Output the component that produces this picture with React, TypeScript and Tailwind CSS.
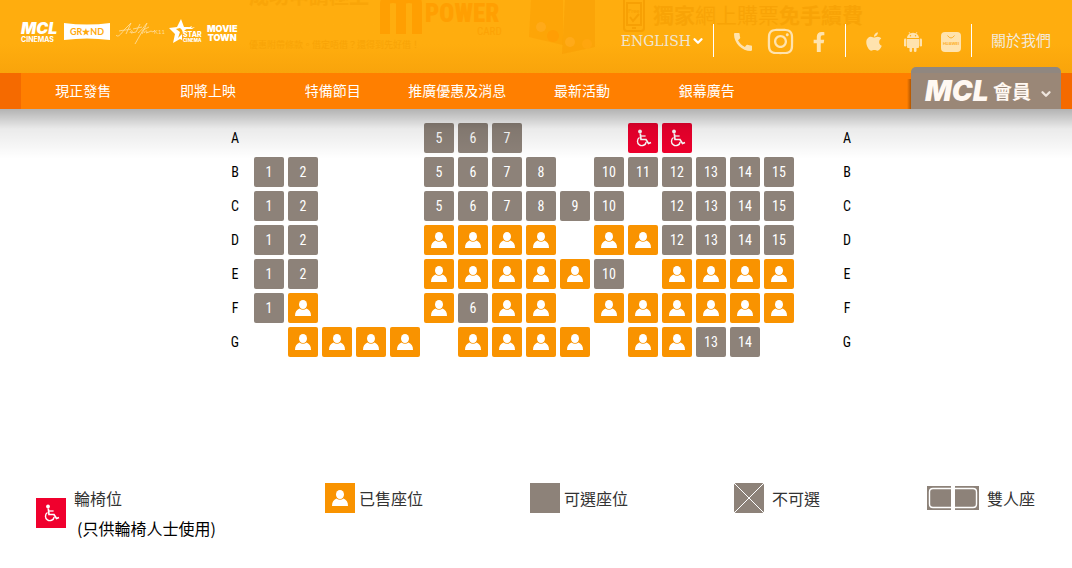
import type { ReactNode } from "react";
import { ChevronDown } from "lucide-react";
import { FaApple, FaFacebookF, FaInstagram } from "react-icons/fa";
import { MdCall } from "react-icons/md";

const NAV = ["現正發售", "即將上映", "特備節目", "推廣優惠及消息", "最新活動", "銀幕廣告"];

// a = available, s = sold, w = wheelchair, . = aisle
const ROWS: [string, string][] = [
  ["A", ".....aaa...ww..."],
  ["B", "aa...aaaa.aaaaaa"],
  ["C", "aa...aaaaaa.aaaa"],
  ["D", "aa...ssss.ssaaaa"],
  ["E", "aa...sssssa.ssss"],
  ["F", "as...sass.ssssss"],
  ["G", ".ssss.ssss.ssaa."],
];

function PersonIcon() {
  return (
    <svg viewBox="0 0 30 30" className="h-[30px] w-[30px]" fill="#fff" aria-hidden="true">
      <ellipse cx="15" cy="11.5" rx="4" ry="4.500" />
      <path d="M7 23c0-4 1.500-6 4.500-7.500 2 1.700 5 1.700 7 0 3 1.500 4.500 3.500 4.500 7.500z" />
    </svg>
  );
}

function WheelchairIcon() {
  return (
    <svg viewBox="0 0 30 30" className="h-[30px] w-[30px]" fill="none" stroke="#fff" aria-hidden="true">
      <circle cx="12" cy="8.500" r="1.900" fill="#fff" stroke="none" />
      <path d="M12.300 10.500l.7 6h5l2.500 4 2.500-1" strokeWidth="1.700" />
      <path d="M12.600 13h5" strokeWidth="1.300" />
      <path d="M11.500 14.500a4.400 4.400 0 1 0 6.700 4.500" strokeWidth="1.400" />
    </svg>
  );
}

function Seat({ type, row, index }: { type: string; row: string; index: number }) {
  const no = index < 5 ? index + 1 : index;

  if (type === ".") return <span className="h-[30px] w-[30px]" />;
  if (type === "s")
    return (
      <button type="button" disabled aria-label={`${row}${no}`} className="h-[30px] w-[30px] rounded-xs bg-[#f99300]">
        <PersonIcon />
      </button>
    );
  if (type === "w")
    return (
      <button type="button" aria-label={`${row}${no}`} className="h-[30px] w-[30px] rounded-xs bg-[#f0002d]">
        <WheelchairIcon />
      </button>
    );
  return (
    <button type="button" className="h-[30px] w-[30px] rounded-xs bg-[#8d8279] text-center text-sm text-white">
      {no}
    </button>
  );
}

function Logos() {
  return (
    <div className="flex items-center gap-1 pt-[18px] text-white">
      <div className="w-[38px] font-['Inter',sans-serif]">
        <div className="text-base leading-4 font-black italic">MCL</div>
        <div className="text-[7px] leading-2 font-bold">CINEMAS</div>
      </div>
      <svg width="48" height="18" viewBox="0 0 48 18" role="img" aria-label="Grand">
        <path d="M1 0q23 3 46 0v17q-23-3-46 0z" fill="#fff" />
        <text x="24" y="12" textAnchor="middle" fontSize="9" fontWeight="700" fontFamily="Lato, sans-serif" fill="#ffaa0d">
          GR★ND
        </text>
      </svg>
      <svg width="50" height="26" viewBox="0 0 50 26" role="img" aria-label="K11 Art House" fill="none" stroke="#ffdb95">
        <path
          d="M1 16c2 3 5-1 8-5l7-7-5 11M4 12c4-1 9-1 12-2M15 14c1-4 4-2 1 0l5-1 4-8M18 10l9-2m-4 6c4-3 5-5 9-10l-5 11M20 25l8-14 6-3m-5 6c2-4 4-2 2 0l3-1 2-1 2 1 2-2"
          strokeWidth="0.900"
        />
        <text x="39" y="15" fontSize="6" fontFamily="Lato, sans-serif" fill="#ffdb95" stroke="none">K11</text>
      </svg>
      <svg width="34" height="27" viewBox="0 0 34 27" role="img" aria-label="Star Cinema" fill="#fff">
        <path d="M12 1l3 8h6l-5 3-3 4v6l-2-1-7 4 2-9-6-6 8-1zM11 10l-4 1 4 3-2 6 5-5-1-3z" fillRule="evenodd" />
        <path d="M16 11l7-3-1 2 4-1-3 2z" />
        <text x="14" y="19" fontSize="7" fontWeight="800" fontFamily="Inter, sans-serif">STAR</text>
        <text x="14" y="24" fontSize="4.500" fontWeight="800" fontFamily="Inter, sans-serif">CINEMA</text>
      </svg>
      <div className="pt-0.5 text-center font-['Inter',sans-serif] text-[9px] leading-[9px] font-black">
        <div>MOVIE</div>
        <div>TOWN</div>
      </div>
    </div>
  );
}

function Banner() {
  return (
    <div className="pointer-events-none absolute inset-0 overflow-hidden text-[#f29b00]" aria-hidden="true">
      <div className="absolute -top-[14px] left-[249px] text-[20px] leading-5 font-bold opacity-40">成功申請極上</div>
      <div className="absolute top-[39px] left-[249px] text-[9px] leading-3 opacity-50">優惠附帶條款。借定唔借？還得到先好借！</div>
      <svg className="absolute top-0 left-[379px]" width="44" height="34" viewBox="0 0 44 34" fill="none" stroke="#ff9c00" strokeWidth="10" opacity="0.800">
        <path d="M6 34V4q0-6 8-6 8 0 8 6v30M22 34V4q0-6 8-6 8 0 8 6v30" />
      </svg>
      <div className="absolute top-0 left-[425px] font-['Roboto_Condensed','Roboto',sans-serif] text-[25px] leading-7 font-black text-[#ff9c00] opacity-80">
        POWER
      </div>
      <div className="absolute top-[26px] left-[477px] font-['Roboto_Condensed','Roboto',sans-serif] text-[11px] leading-3 text-[#fb9c00] opacity-60">CARD</div>
      <svg className="absolute top-0 left-[528px]" width="70" height="56" viewBox="0 0 70 56" opacity="0.700">
        <path d="M3 0h32v45L1 37z" fill="#fb9b00" opacity="0.600" />
        <path d="M37 0h30v47L34 54z" fill="#f69700" opacity="0.550" />
        <circle cx="13" cy="27" r="5" fill="#ffa91e" />
        <circle cx="25" cy="36" r="6" fill="#ff9800" />
        <circle cx="42" cy="42" r="5" fill="#ffa91e" />
        <circle cx="59" cy="44" r="5" fill="#ffa40e" />
      </svg>
      <svg className="absolute top-0 left-[622px]" width="24" height="32" viewBox="0 0 24 32" fill="none" stroke="#f49b00" strokeWidth="2" opacity="0.700">
        <rect x="2" y="-4" width="20" height="35" rx="3" />
        <path d="M5 3h14v22H5zM8 17l3 4 6-7M10 28h4" />
        <text x="6" y="13" fontSize="6" strokeWidth="0" fill="#f49b00" fontFamily="Lato, sans-serif">Free</text>
      </svg>
      <div className="absolute top-1 left-[653px] text-[21px] leading-5 whitespace-nowrap opacity-50">
        <b>獨家</b>網上購票<b>免手續費</b>
      </div>
    </div>
  );
}

function Divider() {
  return <span className="h-[33px] w-px bg-white" />;
}

function AndroidIcon() {
  return (
    <svg width="18" height="20" viewBox="0 0 18 20" fill="#ffe3ae" aria-hidden="true">
      <path d="M3 6a6 5.200 0 0 1 12 0z" />
      <path d="M5 0l1.500 2.500M13 0l-1.500 2.500" stroke="#ffe3ae" strokeWidth="0.800" />
      <circle cx="6.500" cy="3.800" r="0.700" fill="#ffac0e" />
      <circle cx="11.500" cy="3.800" r="0.700" fill="#ffac0e" />
      <path d="M3 7h12v8q0 1-1 1H4q-1 0-1-1z" />
      <rect x="0" y="6.500" width="2.400" height="8" rx="1.200" />
      <rect x="15.600" y="6.500" width="2.400" height="8" rx="1.200" />
      <rect x="5.500" y="14" width="2.600" height="6" rx="1.200" />
      <rect x="9.900" y="14" width="2.600" height="6" rx="1.200" />
    </svg>
  );
}

function Header() {
  return (
    <header className="relative z-10">
      <div className="relative flex h-[73px] justify-between bg-linear-to-b from-[#ffad0e] from-60% to-[#f9a40b] pr-[21px] pl-[21px]">
        <Banner />
        <a href="#home" className="relative block h-[50px]">
          <Logos />
        </a>
        <div className="relative mt-6 flex h-[33px] items-center self-start text-[#ffe3ae]">
          <button type="button" className="mr-2 flex items-center font-['DejaVu_Serif',serif] text-sm text-[#f0e6d4]">
            ENGLISH
            <ChevronDown className="h-[14px] w-[14px] text-white" strokeWidth={4} />
          </button>
          <Divider />
          <a href="#phone" aria-label="電話" className="ml-[17px] pt-0.5"><MdCall className="h-6 w-6" /></a>
          <a href="#instagram" aria-label="Instagram" className="ml-[11px] pt-0.5"><FaInstagram className="h-[29px] w-[29px]" /></a>
          <a href="#facebook" aria-label="Facebook" className="ml-[14px] pt-0.5"><FaFacebookF className="h-5 w-5" /></a>
          <span className="ml-[16px] flex"><Divider /></span>
          <a href="#ios" aria-label="iOS" className="ml-[18px] pt-0.5"><FaApple className="h-[21px] w-5" /></a>
          <a href="#android" aria-label="Android" className="ml-5 pt-0.5"><AndroidIcon /></a>
          <a href="#huawei" aria-label="Huawei AppGallery" className="mr-2.5 ml-[19px] pt-0.5">
            <svg width="20" height="20" viewBox="0 0 20 20">
              <rect width="20" height="20" rx="4" fill="#ffe3ae" />
              <path d="M6.500 3.500q3.500 5 7 0" fill="none" stroke="#fdb02a" />
              <text x="10" y="13" textAnchor="middle" fontSize="4" fontWeight="700" fontFamily="Inter, sans-serif" fill="#fdb02a">HUAWEI</text>
            </svg>
          </a>
          <Divider />
          <a href="#about" className="ml-[19px] text-[15px] text-[#f3eadb]">關於我們</a>
        </div>
      </div>
      <div className="relative flex h-9 items-end bg-[#ff7f00]">
        <span className="h-9 w-[21px] bg-[#f56a00]" />
        <nav className="grid h-9 flex-1 grid-cols-6 items-center pb-[3px] text-center text-sm text-white">
          {NAV.map((n) => (
            <a key={n} href="#nav" className="whitespace-nowrap">{n}</a>
          ))}
        </nav>
        <div className="flex w-[292px] items-end justify-end">
          <span className="h-[30px] w-1 bg-linear-to-l from-[#b25600] to-[#ff7f00]" />
          <button
            type="button"
            className="flex h-[42px] w-[150px] items-center rounded-t-[5px] border-t-[6px] border-[#908780] bg-[#9a8777] pl-[14px] text-[#fff8f2]"
          >
            <span className="w-[68px] text-left font-['Inter',sans-serif] text-[28px] leading-9 font-black italic">MCL</span>
            <span className="text-[19px] leading-9 font-bold">會員</span>
            <ChevronDown className="mt-1.5 ml-2 h-[14px] w-[14px] text-[#eee5dd]" strokeWidth={4} />
          </button>
        </div>
        <span className="h-9 w-[11px] bg-[#f56a00]" />
      </div>
    </header>
  );
}

function SeatMap() {
  return (
    <div className="flex flex-col gap-1 pt-[14px] pl-2.5 font-['Roboto_Condensed','Roboto',sans-serif]">
      {ROWS.map(([name, seats]) => (
        <div key={name} className="flex items-center justify-center gap-1 text-sm text-black">
          <span className="w-[30px] text-center">{name}</span>
          {seats.split("").map((t, i) => (
            <Seat key={i} type={t} row={name} index={i} />
          ))}
          <span className="ml-[34px] w-[30px] text-center">{name}</span>
        </div>
      ))}
    </div>
  );
}

function LegendItem({ icon, children }: { icon: ReactNode; children: ReactNode }) {
  return (
    <li className="flex items-center gap-1 self-start whitespace-nowrap">
      {icon}
      {children}
    </li>
  );
}

function Legend() {
  return (
    <ul className="mt-[126px] grid grid-cols-[289fr_205fr_204fr_193fr_145fr] pl-9 text-base leading-[30px] text-[#333]">
      <LegendItem icon={<span className="bg-[#f0002d]"><WheelchairIcon /></span>}>
        <div className="pl-1">
          輪椅位
          <div className="pl-[3px] text-black">(只供輪椅人士使用)</div>
        </div>
      </LegendItem>
      <LegendItem icon={<span className="bg-[#f99300]"><PersonIcon /></span>}>已售座位</LegendItem>
      <LegendItem icon={<span className="h-[30px] w-[30px] bg-[#8d8279]" />}>可選座位</LegendItem>
      <LegendItem
        icon={
          <svg width="30" height="30" viewBox="0 0 30 30" className="mr-1">
            <rect width="30" height="30" rx="2" fill="#8d8279" />
            <path d="M0 0l30 30M30 0L0 30" stroke="#fff" />
          </svg>
        }
      >
        不可選
      </LegendItem>
      <LegendItem
        icon={
          <svg width="52" height="24" viewBox="0 0 52 24" className="mr-1">
            <path d="M0 0h24v24H0zM28 0h24v24H28z" fill="#8d8279" />
            <path
              d="M24 2.500H6q-3.500 0-3.500 3.500v12q0 3.500 3.500 3.500h18M28 2.500h18q3.500 0 3.500 3.500v12q0 3.500-3.500 3.500H28"
              fill="none"
              stroke="#fff"
              strokeWidth="1.400"
            />
          </svg>
        }
      >
        雙人座
      </LegendItem>
    </ul>
  );
}

export default function App() {
  return (
    <div className="min-h-screen bg-white font-['Noto_Sans_CJK_TC',sans-serif]">
      <Header />
      <main className="relative">
        <SeatMap />
        <Legend />
        <div className="pointer-events-none absolute inset-x-0 top-0 h-[50px] bg-linear-to-b from-black/30 via-black/8 via-40% to-transparent" />
      </main>
    </div>
  );
}
